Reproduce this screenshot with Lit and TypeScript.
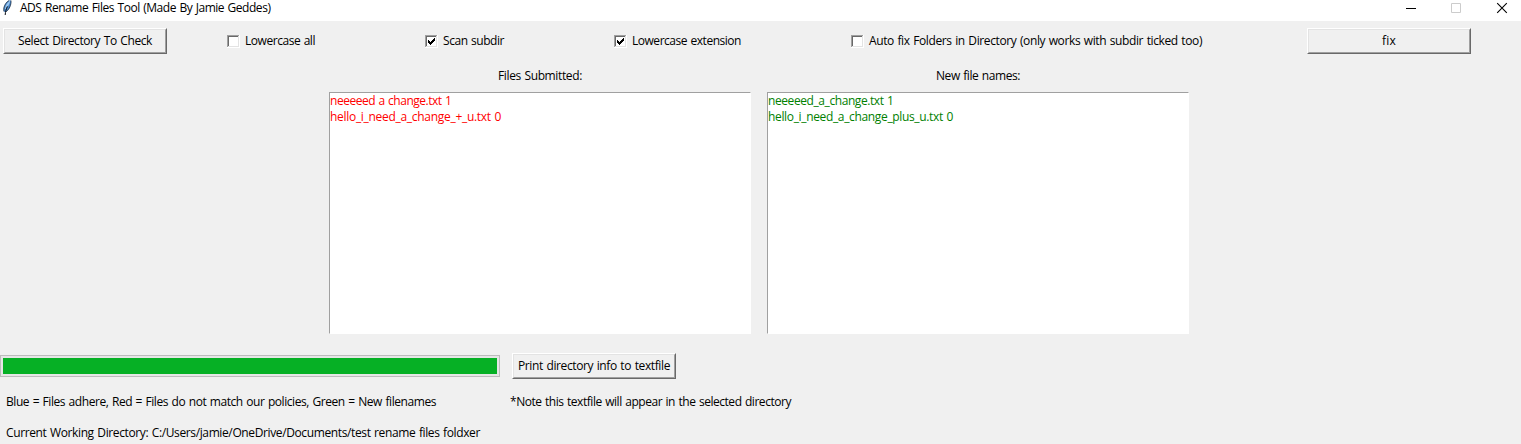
import { LitElement, html, css, svg, nothing } from "lit";
import { customElement, property } from "lit/decorators.js";

const FONT = '12px "Open Sans", "Noto Sans", sans-serif';
const WORD_GAP = 0.8;
const measurer = document.createElement("canvas").getContext("2d")!;

/** One line of text tracked so that it spans a given width. */
@customElement("ui-text")
class UiText extends LitElement {
  @property() text = "";
  @property({ type: Number }) span = 0;

  static styles = css`
    :host {
      display: block;
      flex: none;
      height: 16px;
    }
    .line {
      display: block;
      font: 12px/16px "Open Sans", "Noto Sans", sans-serif;
      word-spacing: 0.8px;
      white-space: pre;
    }
  `;

  render() {
    measurer.font = FONT;
    const gaps = this.text.split(" ").length - 1;
    const natural = measurer.measureText(this.text).width + gaps * WORD_GAP;
    const tracking = (this.span - natural) / this.text.length;
    return html`<span class="line" style="letter-spacing:${tracking.toFixed(3)}px;width:${this.span}px">${this.text}</span>`;
  }
}

@customElement("ui-button")
class UiButton extends LitElement {
  @property() text = "";
  @property({ type: Number }) span = 0;

  static styles = css`
    :host {
      display: block;
      flex: none;
    }
    .outer {
      box-sizing: border-box;
      width: 164px;
      height: 26px;
      border: 1px solid;
      border-color: #fff #696969 #696969 #fff;
    }
    .inner {
      box-sizing: border-box;
      height: 100%;
      display: flex;
      align-items: center;
      justify-content: center;
      border: 1px solid;
      border-color: #e3e3e3 #a0a0a0 #a0a0a0 #e3e3e3;
      background: #f0f0f0;
    }
  `;

  render() {
    return html`<div class="outer" role="button">
      <div class="inner"><ui-text .text=${this.text} .span=${this.span}></ui-text></div>
    </div>`;
  }
}

@customElement("ui-check")
class UiCheck extends LitElement {
  @property() text = "";
  @property({ type: Number }) span = 0;
  @property({ type: Boolean }) checked = false;

  static styles = css`
    :host {
      display: flex;
      align-items: center;
      gap: 5px;
    }
    .box {
      display: block;
      flex: none;
    }
  `;

  render() {
    return html`
      <svg class="box" width="13" height="13" viewBox="0 0 13 13" shape-rendering="crispEdges">
        <path fill="#fff" d="M0 0h13v13H0z" />
        <path fill="#a0a0a0" d="M0 0h12v1H1v11H0z" />
        <path fill="#696969" d="M1 1h10v1H2v9H1z" />
        <path fill="#e3e3e3" d="M11 1h1v11H1v-1h10z" />
        ${this.checked
          ? svg`<path d="M3 5h1v1h1v1h1v-1h1v-1h1v-1h1v-1h1v3h-1v1h-1v1h-1v1h-1v1h-1v-1h-1v-1h-1z" />`
          : nothing}
      </svg>
      <ui-text .text=${this.text} .span=${this.span}></ui-text>
    `;
  }
}

interface Entry {
  name: string;
  span: number;
}

@customElement("app-root")
class AppRoot extends LitElement {
  private submitted: Entry[] = [
    { name: "neeeeed a change.txt 1", span: 121.5 },
    { name: "hello_i_need_a_change_+_u.txt 0", span: 171 },
  ];
  private renamed: Entry[] = [
    { name: "neeeeed_a_change.txt 1", span: 125.5 },
    { name: "hello_i_need_a_change_plus_u.txt 0", span: 185 },
  ];

  static styles = css`
    :host {
      display: block;
      width: 1521px;
      height: 444px;
      overflow: hidden;
      background: #f0f0f0;
      color: #000;
    }
    .titlebar {
      display: flex;
      height: 21px;
      background: #fff;
    }
    .feather {
      display: block;
      flex: none;
      width: 20px;
      height: 16px;
    }
    .controls {
      display: block;
      margin-left: auto;
    }
    .toolbar {
      display: grid;
      grid-template-columns: 224px 198px 189px 237px 456px 164px;
      align-items: center;
      height: 26px;
      padding: 7px 0 0 3px;
    }
    .lists {
      display: flex;
      justify-content: center;
      gap: 16px;
      padding: 14px 3px 0 0;
    }
    .column {
      width: 422px;
    }
    .heading {
      display: flex;
      justify-content: center;
      height: 24px;
    }
    .listbox {
      box-sizing: border-box;
      height: 242px;
      border: 1px solid;
      border-color: #a0a0a0 #fff #fff #a0a0a0;
      background: #fff;
    }
    .red {
      color: #f00;
    }
    .green {
      color: #008000;
    }
    .actions {
      display: flex;
      align-items: center;
      gap: 12px;
      height: 26px;
      margin-top: 19px;
    }
    .progress {
      box-sizing: border-box;
      width: 500px;
      height: 22px;
      padding: 2px;
      border: 1px solid #bcbcbc;
      background: #e6e6e6;
    }
    .bar {
      height: 100%;
      background: #06b025;
    }
    .notes {
      display: grid;
      grid-template-columns: 504px auto;
      padding: 15px 0 0 6px;
    }
    .cwd {
      padding: 15px 0 0 6px;
    }
  `;

  private list(title: string, span: number, tone: string, entries: Entry[]) {
    return html`<section class="column">
      <div class="heading"><ui-text .text=${title} .span=${span}></ui-text></div>
      <div class="listbox ${tone}">
        ${entries.map((e) => html`<ui-text .text=${e.name} .span=${e.span}></ui-text>`)}
      </div>
    </section>`;
  }

  render() {
    return html`
      <header class="titlebar">
        <svg class="feather" viewBox="0 0 20 16">
          <path d="M10.6 0.2C8 .2 5.4 3 4.2 6.2C3.5 8.2 3.4 10 4 11.6L5 12.2C7.5 11.5 9.8 8.5 10.7 5C11.2 3 11.3 1 10.6.2Z" fill="#4a86c8" />
          <path d="M10.4 .6C8.4 1.6 6.4 4 5.3 7.2L4.8 9.8C7.4 7.6 9.4 4.8 10.4.6Z" fill="#9cc8f0" />
          <path d="M9.2.4C6.8 1.6 4.5 4.5 3.8 8V11.4M11 .5C11.4 4.6 9.4 9.4 6 11.8" fill="none" stroke="#1a2430" stroke-width=".7" />
          <path d="M7.4 6.4C6.2 9 5.4 11.5 5.2 15" fill="none" stroke="#080b10" stroke-width="1" />
        </svg>
        <ui-text .text=${"ADS Rename Files Tool (Made By Jamie Geddes)"} .span=${250.5}></ui-text>
        <svg class="controls" width="121" height="21" viewBox="0 0 121 21">
          <path d="M6 8.5h10" stroke="#000" />
          <path d="M51.5 3.5h9v9h-9z" fill="none" stroke="#ccc" />
          <path d="M97.2 3.2l9.6 9.6M106.8 3.2l-9.6 9.6" stroke="#000" stroke-width="1.1" />
        </svg>
      </header>
      <nav class="toolbar">
        <ui-button .text=${"Select Directory To Check"} .span=${134}></ui-button>
        <ui-check .text=${"Lowercase all"} .span=${70}></ui-check>
        <ui-check .text=${"Scan subdir"} .span=${61} checked></ui-check>
        <ui-check .text=${"Lowercase extension"} .span=${109} checked></ui-check>
        <ui-check .text=${"Auto fix Folders in Directory (only works with subdir ticked too)"} .span=${333}></ui-check>
        <ui-button .text=${"fix"} .span=${14}></ui-button>
      </nav>
      <main class="lists">
        ${this.list("Files Submitted:", 84, "red", this.submitted)}
        ${this.list("New file names:", 84, "green", this.renamed)}
      </main>
      <div class="actions">
        <div class="progress"><div class="bar"></div></div>
        <ui-button .text=${"Print directory info to textfile"} .span=${152}></ui-button>
      </div>
      <div class="notes">
        <ui-text .text=${"Blue = Files adhere, Red = Files do not match our policies, Green = New filenames"} .span=${430}></ui-text>
        <ui-text .text=${"*Note this textfile will appear in the selected directory"} .span=${281}></ui-text>
      </div>
      <div class="cwd">
        <ui-text .text=${"Current Working Directory: C:/Users/jamie/OneDrive/Documents/test rename files foldxer"} .span=${474}></ui-text>
      </div>
    `;
  }
}
